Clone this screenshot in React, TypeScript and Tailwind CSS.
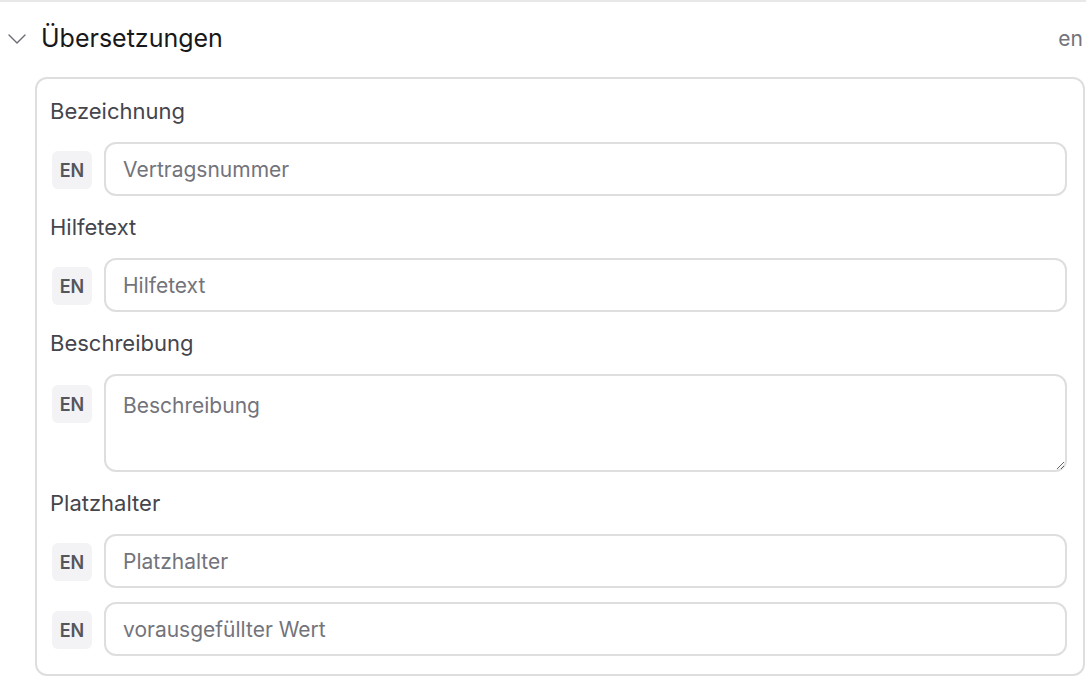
import { ChevronDown } from "lucide-react";

const font = { fontFamily: "Inter, 'Noto Sans', sans-serif" };

function Badge() {
  return (
    <div className="mt-[9px] flex h-[38px] w-[40px] shrink-0 items-center justify-center rounded-md bg-[#f3f3f5] text-[18px] font-semibold text-[#55555c]">
      EN
    </div>
  );
}

function Field({ placeholder }: { placeholder: string }) {
  return (
    <div className="flex items-start gap-3">
      <Badge />
      <input
        className="h-[54px] w-full rounded-xl border-2 border-[#dedede] bg-white px-[17px] text-[21px] text-[#3f3f46] outline-none placeholder:text-[#73737b]"
        placeholder={placeholder}
      />
    </div>
  );
}

function Label({ children }: { children: string }) {
  return <div className="-ml-[2px] flex h-[30px] items-center text-[22px] text-[#45454d]">{children}</div>;
}

export default function App() {
  return (
    <div className="min-h-screen bg-white" style={font}>
      <div className="border-t-2 border-[#e8e8e8]">
        <div className="flex h-[75px] items-center pl-[1px] pr-[3px] pb-[1px]">
          <ChevronDown size={32} strokeWidth={1} className="text-[#6b6b73]" />
          <span className="ml-[8px] text-[25px] text-[#18181b]">Übersetzungen</span>
          <span className="ml-auto text-[21px] text-[#73737b]">en</span>
        </div>
        <div className="ml-[35px] mr-px flex flex-col rounded-xl border-2 border-[#dedede] pl-[15px] pr-4 pt-[17px] pb-[18px]">
          <Label>Bezeichnung</Label>
          <div className="mt-4">
            <Field placeholder="Vertragsnummer" />
          </div>
          <div className="mt-4">
            <Label>Hilfetext</Label>
          </div>
          <div className="mt-4">
            <Field placeholder="Hilfetext" />
          </div>
          <div className="mt-4">
            <Label>Beschreibung</Label>
          </div>
          <div className="mt-4 flex items-start gap-3">
            <div className="mt-[2px]">
              <Badge />
            </div>
            <textarea
              className="h-[98px] w-full rounded-xl border-2 border-[#dedede] bg-white px-[17px] py-[14px] text-[21px] text-[#3f3f46] outline-none placeholder:text-[#73737b]"
              placeholder="Beschreibung"
            />
          </div>
          <div className="mt-4">
            <Label>Platzhalter</Label>
          </div>
          <div className="mt-4">
            <Field placeholder="Platzhalter" />
          </div>
          <div className="mt-[14px]">
            <Field placeholder="vorausgefüllter Wert" />
          </div>
        </div>
      </div>
    </div>
  );
}
